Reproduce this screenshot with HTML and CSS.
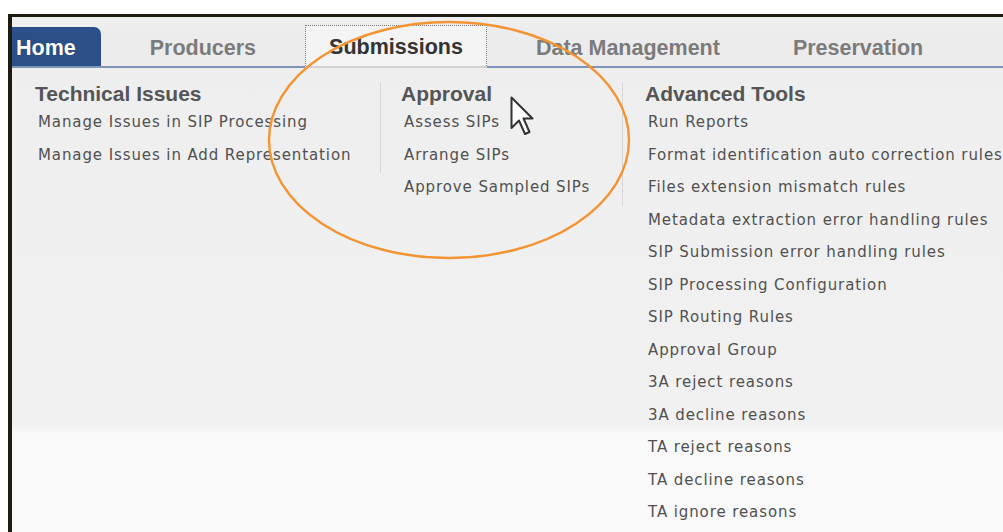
FILE: index.html
```html
<!DOCTYPE html>
<html lang="en">
<head>
    <meta charset="UTF-8">
    <meta name="viewport" content="width=device-width, initial-scale=1.0">
    <title>Submissions menu</title>
    <link rel="stylesheet" href="styles.css">
</head>
<body>
    <div class="frame">
        <ul class="tabs">
            <li class="tab home">Home</li>
            <li class="tab">Producers</li>
            <li class="tab active">Submissions</li>
            <li class="tab">Data Management</li>
            <li class="tab">Preservation</li>
        </ul>

        <div class="menu">
            <div class="col col-issues">
                <h3>Technical Issues</h3>
                <ul>
                    <li>Manage Issues in SIP Processing</li>
                    <li>Manage Issues in Add Representation</li>
                </ul>
            </div>
            <div class="col col-approval">
                <h3>Approval</h3>
                <ul>
                    <li>Assess SIPs</li>
                    <li>Arrange SIPs</li>
                    <li>Approve Sampled SIPs</li>
                </ul>
            </div>
            <div class="col col-tools">
                <h3>Advanced Tools</h3>
                <ul>
                    <li>Run Reports</li>
                    <li>Format identification auto correction rules</li>
                    <li>Files extension mismatch rules</li>
                    <li>Metadata extraction error handling rules</li>
                    <li>SIP Submission error handling rules</li>
                    <li>SIP Processing Configuration</li>
                    <li>SIP Routing Rules</li>
                    <li>Approval Group</li>
                    <li>3A reject reasons</li>
                    <li>3A decline reasons</li>
                    <li>TA reject reasons</li>
                    <li>TA decline reasons</li>
                    <li>TA ignore reasons</li>
                </ul>
            </div>
        </div>
    </div>

    <!-- highlight ring drawn over the screenshot -->
    <svg class="ring" width="1003" height="532" viewBox="0 0 1003 532">
        <ellipse cx="449" cy="140" rx="180" ry="118" fill="none" stroke="#f39331" stroke-width="2.4"/>
    </svg>

    <svg class="cursor" width="26" height="42" viewBox="0 0 26 42">
        <polygon points="1.5,1.5 1.5,32 9,24.5 15,38 19.5,36 13.5,22.5 22.5,22.5" fill="#fff" stroke="#333" stroke-width="2" stroke-linejoin="round"/>
    </svg>
</body>
</html>
```

FILE: styles.css
```css
body {
    margin: 0;
    background-color: #fff;
    font-family: "Liberation Sans", Arial, sans-serif;
    overflow: hidden;
}
.frame {
    margin: 14px 0 0 8px;
    height: calc(100vh - 14px);
    box-sizing: border-box;
    border-top: 3px solid #1f1b10;
    border-left: 4px solid #1f1b10;
    padding-top: 10px;
    background: linear-gradient(#eeeeee, #f1f1f1 79%, #f9f9f9 81%);
    overflow: hidden;
}
.tabs {
    display: flex;
    align-items: flex-end;
    gap: 25px;
    list-style: none;
    margin: 0;
    padding: 0;
    height: 39px;
    border-bottom: 2px solid #7f93b6;
    background-color: #ececec;
}
.tab {
    height: 39px;
    line-height: 42px;
    padding: 0 24px;
    font-size: 21.5px;
    font-weight: bold;
    color: #7b7b7b;
    white-space: nowrap;
}
.tab.home {
    padding: 0 25px 0 4px;
    background-color: #2b5089;
    border-radius: 0 7px 0 0;
    color: #fff;
    text-shadow: 0 0 1px rgba(0, 0, 0, 0.4);
}
.tab.active {
    height: 40px;
    line-height: 42px;
    padding: 0 23px;
    margin-bottom: -2px;
    border: 1px dotted #777;
    border-bottom: 2px solid #d2d2d2;
    background-color: #f4f4f4;
    color: #333;
}
.menu {
    display: flex;
    align-items: flex-start;
    padding: 14px 0 0 23px;
}
.col {
    padding-bottom: 2px;
}
.col-issues {
    width: 345px;
    flex-shrink: 0;
    border-right: 1px solid #d6d6d6;
}
.col-approval {
    width: 221px;
    flex-shrink: 0;
    padding-left: 20px;
    border-right: 1px solid #d6d6d6;
}
.col-tools {
    padding-left: 22px;
    white-space: nowrap;
}
.col h3 {
    margin: 0;
    font-size: 21px;
    line-height: 24px;
    color: #555;
}
.col ul {
    list-style: none;
    margin: 0;
    padding: 0;
}
.col li {
    padding-left: 3px;
    line-height: 32.5px;
    font-family: "DejaVu Sans", Verdana, sans-serif;
    font-size: 15px;
    letter-spacing: 0.9px;
    color: #505050;
}
.ring {
    position: absolute;
    left: 0;
    top: 0;
    pointer-events: none;
}
.cursor {
    position: absolute;
    left: 510px;
    top: 96px;
    pointer-events: none;
}
```
